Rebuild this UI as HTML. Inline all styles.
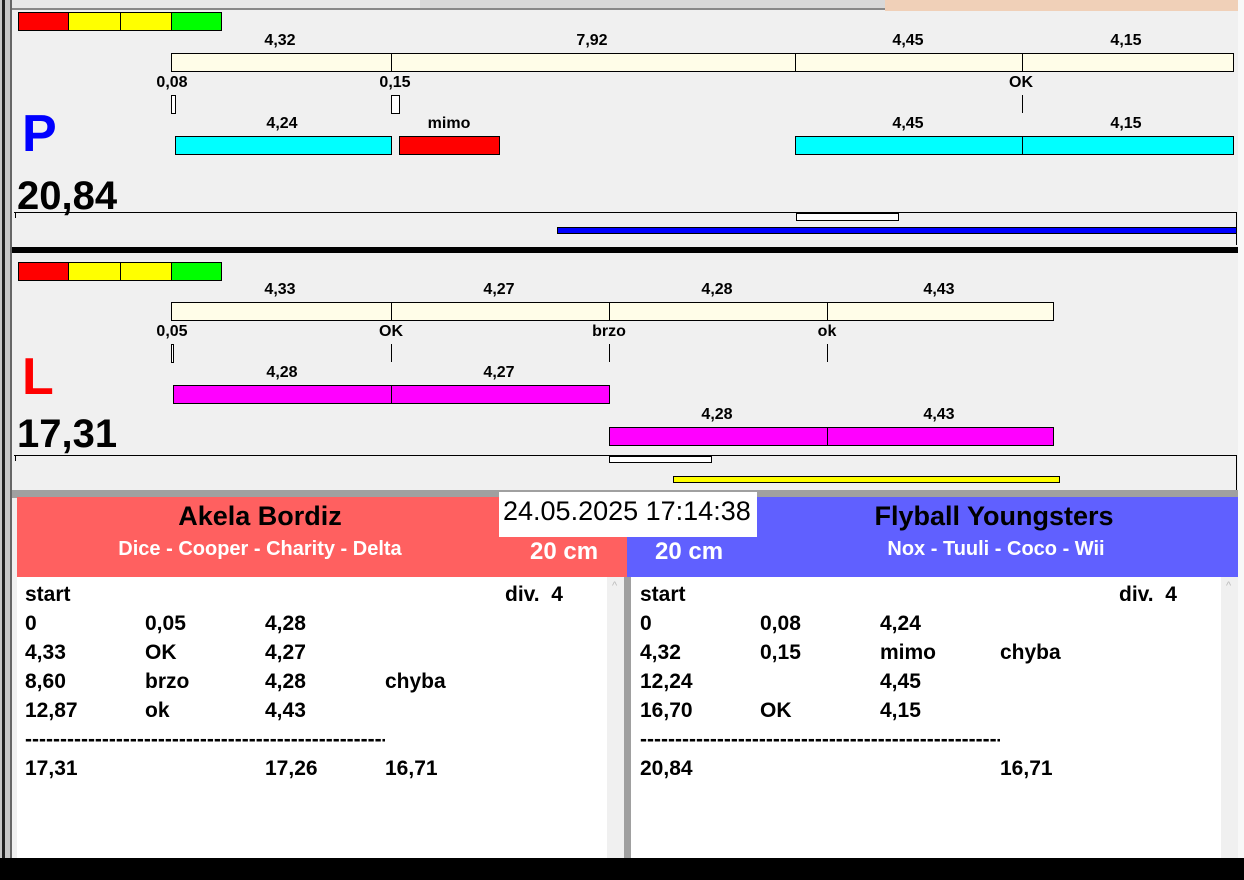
<!DOCTYPE html>
<html><head><meta charset="utf-8"><style>
*{margin:0;padding:0;box-sizing:border-box}
body{width:1244px;height:880px;position:relative;overflow:hidden;background:#f0f0f0;font-family:"Liberation Sans",Arial,sans-serif}
div{position:absolute}
.b{border:1px solid #000}
.t{font-weight:bold;font-size:16px;transform:translateX(-50%);white-space:nowrap;line-height:17px}
.v{width:1px;background:#000}
.r{font-weight:bold;font-size:21px;line-height:24px;white-space:nowrap;top:0}
</style></head><body>
<div style="left:0;top:0;width:885px;height:10px;background:#e8e8e8;border-bottom:2px solid #888"></div>
<div style="left:420px;top:0;width:465px;height:10px;background:#d8d8d8;border-bottom:2px solid #888"></div>
<div style="left:885px;top:0;width:353px;height:11px;background:#f0d0b8"></div>
<div style="left:1238px;top:0;width:6px;height:880px;background:#f8f8f8"></div>
<div style="left:0;top:0;width:12px;height:880px;background:#c8c8c8"></div>
<div style="left:2px;top:0;width:3px;height:880px;background:#222"></div>
<div style="left:10px;top:0;width:2px;height:880px;background:#666"></div>

<div class="b" style="left:18px;top:12px;width:51px;height:19px;background:#f00"></div>
<div class="b" style="left:68px;top:12px;width:53px;height:19px;background:#ff0"></div>
<div class="b" style="left:120px;top:12px;width:52px;height:19px;background:#ff0"></div>
<div class="b" style="left:171px;top:12px;width:51px;height:19px;background:#0f0"></div>

<div class="t" style="left:280px;top:32px">4,32</div>
<div class="t" style="left:592px;top:32px">7,92</div>
<div class="t" style="left:908px;top:32px">4,45</div>
<div class="t" style="left:1126px;top:32px">4,15</div>
<div class="b" style="left:171px;top:53px;width:1063px;height:19px;background:#fffde8"></div>
<div class="v" style="left:391px;top:53px;height:19px"></div>
<div class="v" style="left:795px;top:53px;height:19px"></div>
<div class="v" style="left:1022px;top:53px;height:19px"></div>
<div class="t" style="left:172px;top:74px">0,08</div>
<div class="t" style="left:395px;top:74px">0,15</div>
<div class="t" style="left:1021px;top:74px">OK</div>
<div class="b" style="left:171px;top:95px;width:5px;height:19px;background:#fff"></div>
<div class="b" style="left:391px;top:95px;width:9px;height:19px;background:#fff"></div>
<div class="v" style="left:1022px;top:95px;height:18px"></div>
<div class="t" style="left:282px;top:115px">4,24</div>
<div class="t" style="left:449px;top:115px">mimo</div>
<div class="t" style="left:908px;top:115px">4,45</div>
<div class="t" style="left:1126px;top:115px">4,15</div>
<div class="b" style="left:175px;top:136px;width:217px;height:19px;background:#0ff"></div>
<div class="b" style="left:399px;top:136px;width:101px;height:19px;background:#f00"></div>
<div class="b" style="left:795px;top:136px;width:228px;height:19px;background:#0ff"></div>
<div class="b" style="left:1022px;top:136px;width:212px;height:19px;background:#0ff"></div>
<div style="left:22px;top:104px;font-size:52px;font-weight:bold;color:#0000ff;line-height:60px">P</div>
<div style="left:17px;top:174px;font-size:40px;font-weight:bold;line-height:44px">20,84</div>
<div style="left:14px;top:212px;width:1223px;height:1px;background:#000"></div>
<div class="v" style="left:15px;top:212px;height:6px"></div>
<div class="v" style="left:1236px;top:212px;height:33px"></div>
<div class="b" style="left:796px;top:213px;width:103px;height:8px;background:#fff"></div>
<div class="b" style="left:557px;top:227px;width:680px;height:7px;background:#0000ff"></div>
<div style="left:12px;top:247px;width:1226px;height:6px;background:#000"></div>

<div class="b" style="left:18px;top:262px;width:51px;height:19px;background:#f00"></div>
<div class="b" style="left:68px;top:262px;width:53px;height:19px;background:#ff0"></div>
<div class="b" style="left:120px;top:262px;width:52px;height:19px;background:#ff0"></div>
<div class="b" style="left:171px;top:262px;width:51px;height:19px;background:#0f0"></div>
<div class="t" style="left:280px;top:281px">4,33</div>
<div class="t" style="left:499px;top:281px">4,27</div>
<div class="t" style="left:717px;top:281px">4,28</div>
<div class="t" style="left:939px;top:281px">4,43</div>
<div class="b" style="left:171px;top:302px;width:883px;height:19px;background:#fffde8"></div>
<div class="v" style="left:391px;top:302px;height:19px"></div>
<div class="v" style="left:609px;top:302px;height:19px"></div>
<div class="v" style="left:827px;top:302px;height:19px"></div>
<div class="t" style="left:172px;top:323px">0,05</div>
<div class="t" style="left:391px;top:323px">OK</div>
<div class="t" style="left:609px;top:323px">brzo</div>
<div class="t" style="left:827px;top:323px">ok</div>
<div class="b" style="left:171px;top:344px;width:3px;height:19px;background:#fff"></div>
<div class="v" style="left:391px;top:344px;height:18px"></div>
<div class="v" style="left:609px;top:344px;height:18px"></div>
<div class="v" style="left:827px;top:344px;height:18px"></div>
<div class="t" style="left:282px;top:364px">4,28</div>
<div class="t" style="left:499px;top:364px">4,27</div>
<div class="b" style="left:173px;top:385px;width:219px;height:19px;background:#f0f"></div>
<div class="b" style="left:391px;top:385px;width:219px;height:19px;background:#f0f"></div>
<div class="t" style="left:717px;top:406px">4,28</div>
<div class="t" style="left:939px;top:406px">4,43</div>
<div class="b" style="left:609px;top:427px;width:219px;height:19px;background:#f0f"></div>
<div class="b" style="left:827px;top:427px;width:227px;height:19px;background:#f0f"></div>
<div style="left:22px;top:350px;font-size:52px;font-weight:bold;color:#f00;line-height:54px">L</div>
<div style="left:17px;top:412px;font-size:40px;font-weight:bold;line-height:44px">17,31</div>
<div style="left:14px;top:455px;width:1223px;height:1px;background:#000"></div>
<div class="v" style="left:15px;top:455px;height:6px"></div>
<div class="v" style="left:1236px;top:455px;height:35px"></div>
<div class="b" style="left:609px;top:456px;width:103px;height:7px;background:#fff"></div>
<div class="b" style="left:673px;top:476px;width:387px;height:7px;background:#ff0"></div>
<div style="left:12px;top:490px;width:1226px;height:8px;background:#a0a0a0"></div>

<div style="left:17px;top:497px;width:610px;height:80px;background:#ff6060"></div>
<div style="left:627px;top:497px;width:611px;height:80px;background:#6060ff"></div>
<div style="left:499px;top:492px;width:258px;height:45px;background:#fff"></div>
<div style="left:503px;top:496px;font-size:27px;line-height:30px;white-space:nowrap">24.05.2025 17:14:38</div>
<div class="t" style="left:260px;top:501px;font-size:27px;line-height:30px">Akela Bordiz</div>
<div class="t" style="left:260px;top:538px;font-size:20px;line-height:22px;color:#fff">Dice - Cooper - Charity - Delta</div>
<div style="left:530px;top:539px;font-size:24px;font-weight:bold;color:#fff;line-height:26px">20 cm</div>
<div style="left:655px;top:539px;font-size:24px;font-weight:bold;color:#fff;line-height:26px">20 cm</div>
<div class="t" style="left:994px;top:501px;font-size:27px;line-height:30px">Flyball Youngsters</div>
<div class="t" style="left:996px;top:538px;font-size:20px;line-height:22px;color:#fff">Nox - Tuuli - Coco - Wii</div>

<div style="left:17px;top:577px;width:590px;height:281px;background:#fff"></div>
<div style="left:607px;top:577px;width:17px;height:281px;background:#f0f0f0"></div>
<div style="left:612px;top:580px;color:#bbb;font-size:11px">^</div>
<div style="left:624px;top:577px;width:7px;height:281px;background:#a0a0a0"></div>
<div style="left:631px;top:577px;width:590px;height:281px;background:#fff"></div>
<div style="left:1221px;top:577px;width:17px;height:281px;background:#f0f0f0"></div>
<div style="left:1226px;top:580px;color:#bbb;font-size:11px">^</div>

<div style="left:0;top:2px;width:1244px;height:0">
<div class="r" style="left:25px;top:581px">start</div><div class="r" style="left:505px;top:581px">div.&nbsp;&nbsp;4</div>
<div class="r" style="left:25px;top:610px">0</div><div class="r" style="left:145px;top:610px">0,05</div><div class="r" style="left:265px;top:610px">4,28</div>
<div class="r" style="left:25px;top:639px">4,33</div><div class="r" style="left:145px;top:639px">OK</div><div class="r" style="left:265px;top:639px">4,27</div>
<div class="r" style="left:25px;top:668px">8,60</div><div class="r" style="left:145px;top:668px">brzo</div><div class="r" style="left:265px;top:668px">4,28</div><div class="r" style="left:385px;top:668px">chyba</div>
<div class="r" style="left:25px;top:697px">12,87</div><div class="r" style="left:145px;top:697px">ok</div><div class="r" style="left:265px;top:697px">4,43</div>
<div class="r" style="left:25px;top:726px;width:360px;overflow:hidden">------------------------------------------------------------</div>
<div class="r" style="left:25px;top:755px">17,31</div><div class="r" style="left:265px;top:755px">17,26</div><div class="r" style="left:385px;top:755px">16,71</div>

<div class="r" style="left:640px;top:581px">start</div><div class="r" style="left:1119px;top:581px">div.&nbsp;&nbsp;4</div>
<div class="r" style="left:640px;top:610px">0</div><div class="r" style="left:760px;top:610px">0,08</div><div class="r" style="left:880px;top:610px">4,24</div>
<div class="r" style="left:640px;top:639px">4,32</div><div class="r" style="left:760px;top:639px">0,15</div><div class="r" style="left:880px;top:639px">mimo</div><div class="r" style="left:1000px;top:639px">chyba</div>
<div class="r" style="left:640px;top:668px">12,24</div><div class="r" style="left:880px;top:668px">4,45</div>
<div class="r" style="left:640px;top:697px">16,70</div><div class="r" style="left:760px;top:697px">OK</div><div class="r" style="left:880px;top:697px">4,15</div>
<div class="r" style="left:640px;top:726px;width:360px;overflow:hidden">------------------------------------------------------------</div>
<div class="r" style="left:640px;top:755px">20,84</div><div class="r" style="left:1000px;top:755px">16,71</div>
</div>

<div style="left:0;top:858px;width:1244px;height:22px;background:#000"></div>
</body></html>
